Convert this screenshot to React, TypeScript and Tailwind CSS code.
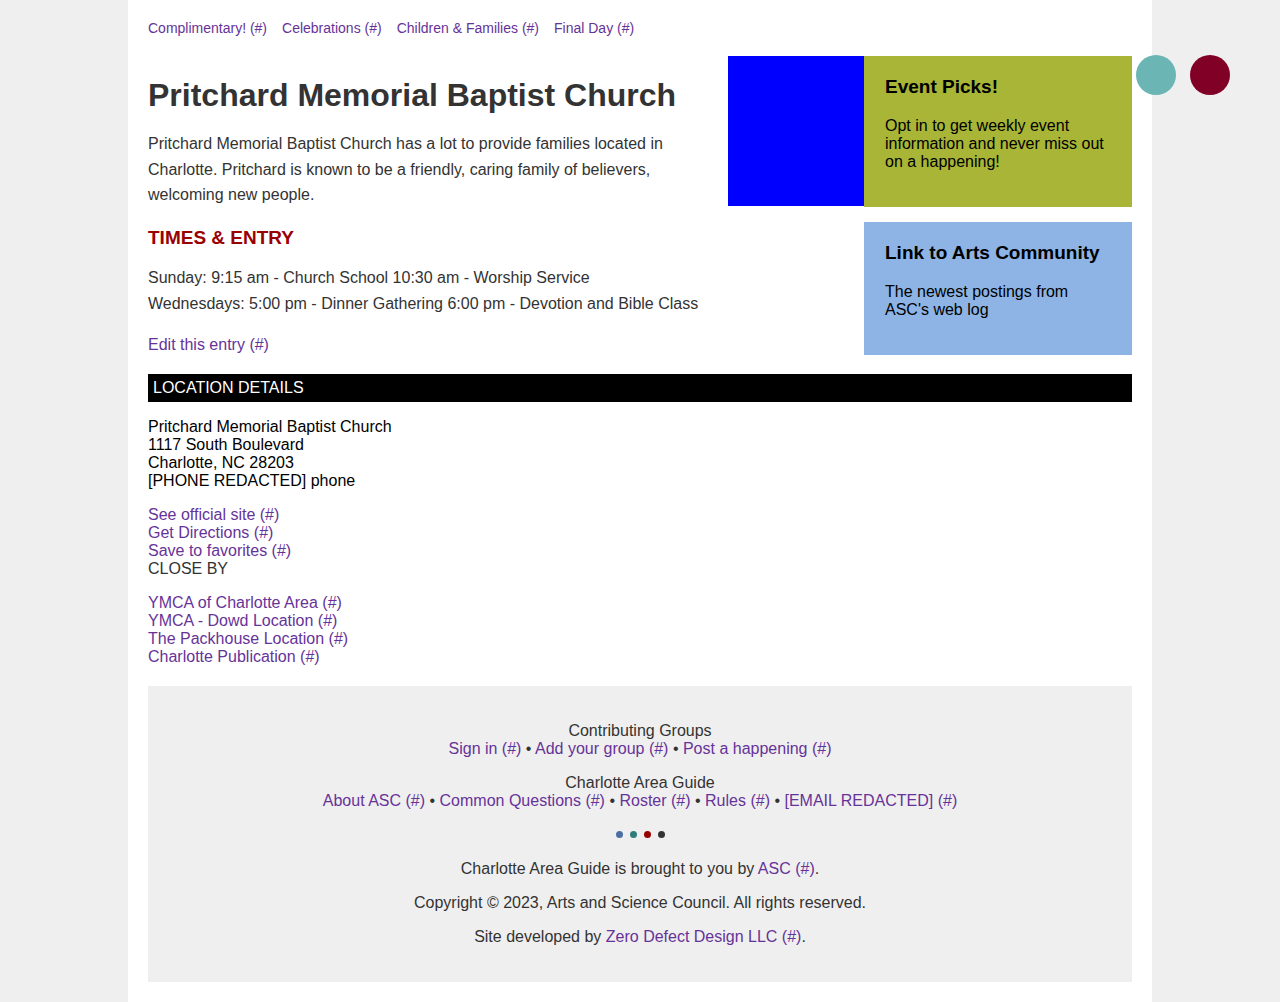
const link = "text-[#663399]"

function TopNav() {
  return (
    <nav className="flex gap-[15px] pt-[1px] text-[14px] leading-[15px]">
      <a className={link} href="#">Complimentary! (#)</a>
      <a className={link} href="#">Celebrations (#)</a>
      <a className={link} href="#">Children &amp; Families (#)</a>
      <a className={link} href="#">Final Day (#)</a>
    </nav>
  )
}

function Card({ title, body, color }: { title: string; body: string; color: string }) {
  return (
    <div className={`${color} px-[21px] pt-[19px] pb-[36px] text-black`}>
      <h3 className="text-[19px] font-bold leading-[23px]">{title}</h3>
      <p className="mt-[19px] text-[16px] leading-[18px]">{body}</p>
    </div>
  )
}

function Aside() {
  return (
    <aside className="flex w-[404px] shrink-0 flex-col gap-[15px]">
      <div className="flex">
        <div className="h-[150px] w-[136px] shrink-0 bg-[#0000ff]" />
        <div className="flex-1">
          <Card
            title="Event Picks!"
            body="Opt in to get weekly event information and never miss out on a happening!"
            color="bg-[#a8b536]"
          />
        </div>
      </div>
      <div className="ml-[136px]">
        <Card
          title="Link to Arts Community"
          body="The newest postings from ASC's web log"
          color="bg-[#8db4e5]"
        />
      </div>
    </aside>
  )
}

function Intro() {
  return (
    <div className="flex-1 text-[#333]">
      <h1 className="mt-[20px] text-[32px] font-bold leading-[38px]">
        Pritchard Memorial Baptist Church
      </h1>
      <p className="mt-[17px] text-[16px] leading-[25.6px]">
        Pritchard Memorial Baptist Church has a lot to provide families located in Charlotte. Pritchard is
        known to be a friendly, caring family of believers, welcoming new people.
      </p>
      <h2 className="mt-[19px] text-[19px] font-bold leading-[22px] text-[#990000]">TIMES &amp; ENTRY</h2>
      <div className="mt-[16px] text-[16px] leading-[26px]">
        <p>Sunday: 9:15 am - Church School 10:30 am - Worship Service</p>
        <p>Wednesdays: 5:00 pm - Dinner Gathering 6:00 pm - Devotion and Bible Class</p>
      </div>
      <p className="mt-[15px] text-[16px] leading-[26px]">
        <a className={link} href="#">Edit this entry (#)</a>
      </p>
    </div>
  )
}

function Location() {
  return (
    <section className="text-[16px] leading-[18px]">
      <h2 className="h-[28px] bg-black pl-[5px] leading-[28px] text-white">LOCATION DETAILS</h2>
      <div className="mt-[16px] text-black">
        <p>Pritchard Memorial Baptist Church</p>
        <p>1117 South Boulevard</p>
        <p>Charlotte, NC 28203</p>
        <p>[PHONE REDACTED] phone</p>
      </div>
      <div className="mt-[16px] flex flex-col items-start">
        <a className={link} href="#">See official site (#)</a>
        <a className={link} href="#">Get Directions (#)</a>
        <a className={link} href="#">Save to favorites (#)</a>
        <span className="text-[#333]">CLOSE BY</span>
      </div>
      <div className="mt-[16px] flex flex-col items-start">
        <a className={link} href="#">YMCA of Charlotte Area (#)</a>
        <a className={link} href="#">YMCA - Dowd Location (#)</a>
        <a className={link} href="#">The Packhouse Location (#)</a>
        <a className={link} href="#">Charlotte Publication (#)</a>
      </div>
    </section>
  )
}

function Footer() {
  return (
    <footer className="mt-[20px] bg-[#efefef] pt-[36px] pb-[36px] text-center text-[16px] leading-[18px] text-[#333]">
      <p>Contributing Groups</p>
      <p>
        <a className={link} href="#">Sign in (#)</a> • <a className={link} href="#">Add your group (#)</a> •{" "}
        <a className={link} href="#">Post a happening (#)</a>
      </p>
      <p className="mt-[16px]">Charlotte Area Guide</p>
      <p>
        <a className={link} href="#">About ASC (#)</a> • <a className={link} href="#">Common Questions (#)</a> •{" "}
        <a className={link} href="#">Roster (#)</a> • <a className={link} href="#">Rules (#)</a> •{" "}
        <a className={link} href="#">[EMAIL REDACTED] (#)</a>
      </p>
      <div className="mt-[16px] flex h-[18px] items-center justify-center gap-[7px]">
        <span className="h-[7px] w-[7px] rounded-full bg-[#4a6fa5]" />
        <span className="h-[7px] w-[7px] rounded-full bg-[#2e7d7a]" />
        <span className="h-[7px] w-[7px] rounded-full bg-[#990000]" />
        <span className="h-[7px] w-[7px] rounded-full bg-[#333]" />
      </div>
      <p className="mt-[16px]">
        Charlotte Area Guide is brought to you by <a className={link} href="#">ASC (#)</a>.
      </p>
      <p className="mt-[16px]">Copyright © 2023, Arts and Science Council. All rights reserved.</p>
      <p className="mt-[16px]">
        Site developed by <a className={link} href="#">Zero Defect Design LLC (#)</a>.
      </p>
    </footer>
  )
}

export default function App() {
  return (
    <div className="relative min-h-screen bg-[#efefef] font-['Liberation_Sans',Arial,sans-serif]">
      <div className="mx-auto w-[1024px] bg-white p-[20px]">
        <TopNav />
        <div className="mt-[20px] mb-[16px] flex gap-[20px]">
          <Intro />
          <Aside />
        </div>
        <Location />
        <Footer />
      </div>
      <div className="absolute top-[55px] right-[50px] flex gap-[14px]">
        <span className="h-[40px] w-[40px] rounded-full bg-[#6bb5b5]" />
        <span className="h-[40px] w-[40px] rounded-full bg-[#800026]" />
      </div>
    </div>
  )
}
